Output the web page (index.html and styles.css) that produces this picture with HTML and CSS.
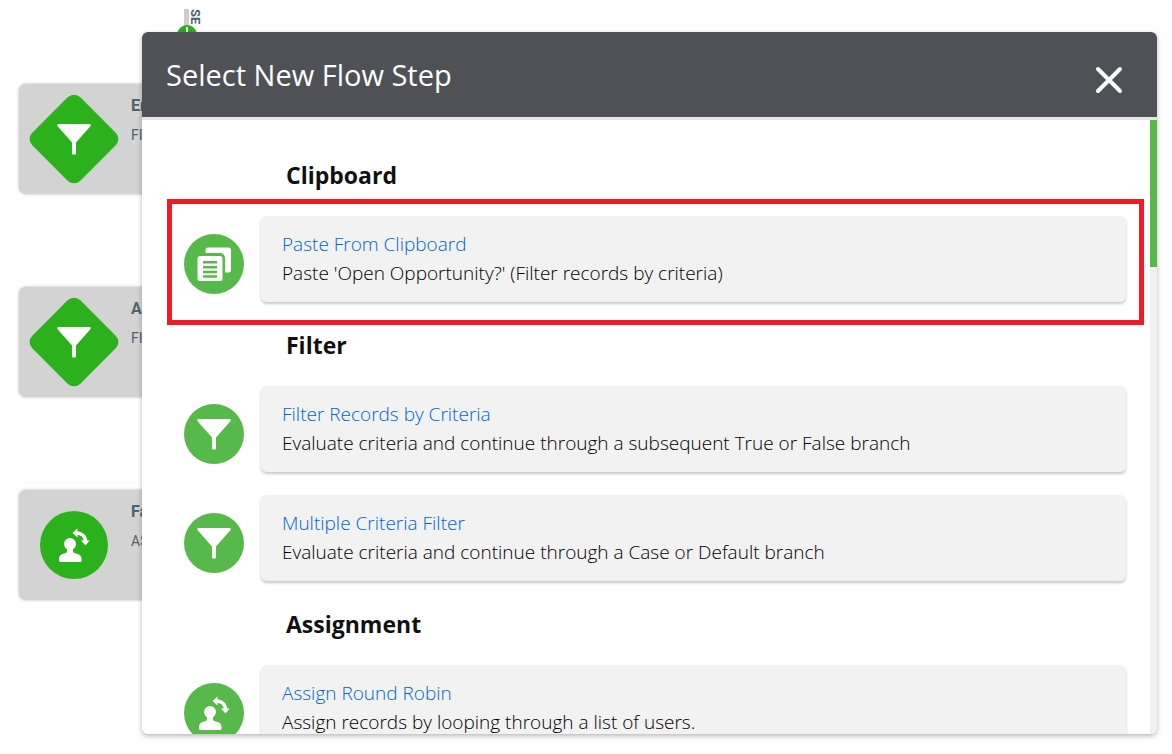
FILE: index.html
```html
<!DOCTYPE html>
<html lang="en">
<head>
    <meta charset="UTF-8">
    <meta name="viewport" content="width=device-width, initial-scale=1.0">
    <title>Select New Flow Step</title>
    <link rel="stylesheet" href="styles.css">
</head>
<body>
    <!-- shared icons -->
    <svg class="sprite" aria-hidden="true">
        <symbol id="icon-filter" viewBox="0 0 60 60">
            <path d="M14 15h32q1.500 .5 .4 2.300L32 33.500V44.500q0 1-1 1h-2q-1 0-1-1V33.500L13.600 17.300q-1.100-1.800 .4-2.300z" fill="#fff"/>
        </symbol>
        <symbol id="icon-paste" viewBox="0 0 60 60">
            <path d="M24 13.500h20.500a2.500 2.500 0 0 1 2.500 2.500v20a2.500 2.500 0 0 1-2.500 2.500H41V24a5 5 0 0 0-5-5H21.500v-3a2.500 2.500 0 0 1 2.500-2.500z" fill="#fff"/>
            <rect x="13.500" y="22" width="25" height="25" rx="2.500" fill="#fff"/>
            <path d="M19 28.300h14M19 33.200h14M19 38h14M19 42.500h14" stroke="#56b949" stroke-width="2.400"/>
        </symbol>
        <symbol id="icon-user" viewBox="0 0 60 60">
            <circle cx="26" cy="29" r="6" fill="#fff"/>
            <path d="M23 31h6v5q0 2 3 2.500c4 1 5.500 2.500 5.500 5.500v1.500q0 1.500-1.500 1.500h-19.500q-1.500 0-1.500-1.500V44c0-3 1.500-4.500 5-5.500q3-.5 3-2.500z" fill="#fff"/>
            <path d="M32 18c6 0 9.500 3.500 9.500 9" fill="none" stroke="#fff" stroke-width="3.600"/>
            <path d="M28.500 18l5-4.500v9zM37 25.500h8.500L41.500 30.500z" fill="#fff"/>
        </symbol>
    </svg>

    <!-- flow chart behind the dialog -->
    <div class="canvas">
        <div class="branch">
            <span class="branch-line"></span>
            <span class="branch-label">SE</span>
            <span class="branch-dot"></span>
        </div>
        <div class="node node-1">
            <svg class="node-icon" viewBox="0 0 90 90">
                <rect x="11" y="11" width="68" height="68" rx="9" transform="rotate(45 45 45)" fill="#2bb11b"/>
                <use href="#icon-filter" x="15" y="15" width="60" height="60"/>
            </svg>
            <div class="node-text"><strong>Email Opt Out?</strong><span>FILTER</span></div>
        </div>
        <div class="node node-2">
            <svg class="node-icon" viewBox="0 0 90 90">
                <rect x="11" y="11" width="68" height="68" rx="9" transform="rotate(45 45 45)" fill="#2bb11b"/>
                <use href="#icon-filter" x="15" y="15" width="60" height="60"/>
            </svg>
            <div class="node-text"><strong>Account Owner?</strong><span>FILTER</span></div>
        </div>
        <div class="node node-3">
            <svg class="node-icon" viewBox="0 0 90 90">
                <circle cx="45" cy="45" r="34" fill="#2bb11b"/>
                <use href="#icon-user" x="15" y="15" width="60" height="60"/>
            </svg>
            <div class="node-text"><strong>Fallback</strong><span>ASSIGN</span></div>
        </div>
    </div>

    <div class="overlay">
        <div class="modal" role="dialog" aria-labelledby="modal-title">
            <header class="modal-header">
                <h1 id="modal-title">Select New Flow Step</h1>
                <button class="close" aria-label="Close">
                    <svg viewBox="0 0 28 28"><path d="M3 3L25 25M25 3L3 25" stroke="#fff" stroke-width="4" stroke-linecap="round"/></svg>
                </button>
            </header>
            <div class="modal-body">
                <div class="steps">
                    <section class="group">
                        <h2>Clipboard</h2>
                        <div class="step highlighted">
                            <svg class="step-icon"><use href="#icon-paste"/></svg>
                            <div class="card">
                                <a href="#">Paste From Clipboard</a>
                                <p>Paste 'Open Opportunity?' (Filter records by criteria)</p>
                            </div>
                        </div>
                    </section>
                    <section class="group">
                        <h2>Filter</h2>
                        <div class="step">
                            <svg class="step-icon"><use href="#icon-filter"/></svg>
                            <div class="card">
                                <a href="#">Filter Records by Criteria</a>
                                <p>Evaluate criteria and continue through a subsequent True or False branch</p>
                            </div>
                        </div>
                        <div class="step">
                            <svg class="step-icon"><use href="#icon-filter"/></svg>
                            <div class="card">
                                <a href="#">Multiple Criteria Filter</a>
                                <p>Evaluate criteria and continue through a Case or Default branch</p>
                            </div>
                        </div>
                    </section>
                    <section class="group">
                        <h2>Assignment</h2>
                        <div class="step">
                            <svg class="step-icon"><use href="#icon-user"/></svg>
                            <div class="card">
                                <a href="#">Assign Round Robin</a>
                                <p>Assign records by looping through a list of users.</p>
                            </div>
                        </div>
                    </section>
                </div>
                <div class="scrollbar"><div class="thumb"></div></div>
            </div>
        </div>
    </div>
</body>
</html>
```
FILE: styles.css
```css
* {
    box-sizing: border-box;
}

body {
    margin: 0;
    height: 100vh;
    overflow: hidden;
    background-color: #fefefe;
    color: #111;
    font-family: "Segoe UI", "Open Sans", "Noto Sans", sans-serif;
}

h1, h2, p {
    margin: 0;
}

.sprite {
    position: absolute;
    width: 0;
    height: 0;
}

.canvas {
    position: absolute;
    inset: 9px 0 0 0;
    overflow: hidden;
}

.branch-line {
    position: absolute;
    left: 184px;
    top: 0;
    width: 5px;
    height: 24px;
    background-color: #d0cccb;
}

.branch-label {
    position: absolute;
    left: 188px;
    top: 0;
    writing-mode: vertical-rl;
    color: #4d626c;
    font: bold 13px/14px "Roboto", sans-serif;
}

.branch-dot {
    position: absolute;
    left: 177px;
    top: 16px;
    width: 20px;
    height: 20px;
    border-radius: 50%;
    background: linear-gradient(#fff, #fff) center / 2px 16px no-repeat #2bb11b;
}

.node {
    position: absolute;
    left: 19px;
    display: flex;
    gap: 12px;
    width: 320px;
    height: 110px;
    padding: 10px;
    border-radius: 7px;
    background-color: #d3d3d3;
    box-shadow: 0 0 3px rgba(0, 0, 0, 0.3);
}

.node-1 {
    top: 75px;
}

.node-2 {
    top: 278px;
}

.node-3 {
    top: 481px;
}

.node-icon {
    width: 90px;
    height: 90px;
}

.node-text {
    display: flex;
    flex-direction: column;
    gap: 9px;
    padding-top: 2px;
    color: #4d626c;
    font: 14px/20px "Roboto", sans-serif;
}

.node-text strong {
    font-size: 16px;
}

.overlay {
    position: absolute;
    inset: 0;
    display: flex;
    padding: 32px 15px 20px 142px;
}

.modal {
    flex: 1;
    display: flex;
    flex-direction: column;
    border-radius: 6px;
    background-color: #fff;
    box-shadow: 0 2px 5px rgba(0, 0, 0, 0.28);
    overflow: hidden;
}

.modal-header {
    display: flex;
    justify-content: space-between;
    align-items: center;
    padding: 21px 34px 20px 24px;
    border-bottom: 3px solid #e5e5e7;
    background-color: #505157;
    color: #fff;
}

.modal-header h1 {
    font-size: 29px;
    font-weight: 400;
    line-height: 44px;
}

.close {
    width: 28px;
    height: 28px;
    margin-top: 10px;
    padding: 0;
    border: none;
    background: none;
    cursor: pointer;
}

.close svg {
    display: block;
}

.modal-body {
    flex: 1;
    display: flex;
    min-height: 0;
}

.steps {
    flex: 1;
    display: flex;
    flex-direction: column;
    gap: 27px;
    padding: 39px 24px 0 42px;
    overflow: hidden;
}

.group {
    display: flex;
    flex-direction: column;
    gap: 23px;
}

.group h2 {
    padding-left: 102px;
    margin-bottom: 1px;
    font-size: 23px;
    font-weight: 700;
    line-height: 33px;
}

.step {
    position: relative;
    display: flex;
    align-items: center;
    gap: 17px;
}

.highlighted::after {
    content: "";
    position: absolute;
    inset: -17px -18px -23px -17px;
    border: 5px solid #f01b24;
    pointer-events: none;
}

.step-icon {
    flex: none;
    width: 60px;
    height: 60px;
    margin-top: 10px;
    border-radius: 50%;
    background-color: #56b949;
}

.card {
    flex: 1;
    padding: 14px 21px;
    border-radius: 6px;
    background-color: #f2f2f2;
    box-shadow: 0 2px 3px rgba(0, 0, 0, 0.22);
    color: #000;
    font-size: 19px;
    font-weight: 300;
    line-height: 29px;
}

.card a {
    color: #0066d0;
    text-decoration: none;
}

.scrollbar {
    width: 7px;
    background-color: #f0f0f0;
}

.thumb {
    height: 24%;
    background-color: #56b949;
}
```
